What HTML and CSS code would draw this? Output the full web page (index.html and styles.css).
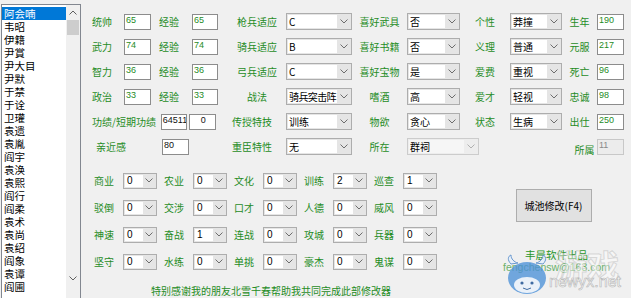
FILE: index.html
```html
<!DOCTYPE html>
<html lang="zh-CN">
<head>
    <meta charset="UTF-8">
    <title>武将修改</title>
    <link rel="stylesheet" href="styles.css">
</head>
<body>
<div class="app">
    <!-- 武将列表 -->
    <div class="listbox">
        <div class="items">
            <div class="item selected">阿会喃</div>
            <div class="item">韦昭</div>
            <div class="item">伊籍</div>
            <div class="item">尹賞</div>
            <div class="item">尹大目</div>
            <div class="item">尹默</div>
            <div class="item">于禁</div>
            <div class="item">于诠</div>
            <div class="item">卫瓘</div>
            <div class="item">袁遗</div>
            <div class="item">袁胤</div>
            <div class="item">阎宇</div>
            <div class="item">袁涣</div>
            <div class="item">袁熙</div>
            <div class="item">阎行</div>
            <div class="item">阎柔</div>
            <div class="item">袁术</div>
            <div class="item">袁尚</div>
            <div class="item">袁绍</div>
            <div class="item">阎象</div>
            <div class="item">袁谭</div>
            <div class="item">阎圃</div>
        </div>
        <div class="scrollbar">
            <svg class="sb-arrow" width="8" height="5" viewBox="0 0 8 5"><polyline points="0.5,4.5 4,1 7.5,4.5" fill="none" stroke="#606060"/></svg>
            <div class="thumb"></div>
            <div class="sb-fill"></div>
            <svg class="sb-arrow" width="8" height="5" viewBox="0 0 8 5"><polyline points="0.5,0.5 4,4 7.5,0.5" fill="none" stroke="#606060"/></svg>
        </div>
    </div>

    <div class="main">
        <!-- 基本属性 -->
        <div class="attrs">
            <div class="lbl">统帅</div><div class="field">65</div>
            <div class="lbl exp">经验</div><div class="field">65</div>
            <div class="lbl mid">枪兵适应</div><div class="combo"><span class="val">C</span><span class="arr"><svg width="8" height="5" viewBox="0 0 8 5"><polyline points="0.5,0.5 4,4 7.5,0.5" fill="none" stroke="#6d6d6d"/></svg></span></div>
            <div class="lbl mid">喜好武具</div><div class="combo"><span class="val">否</span><span class="arr"><svg width="8" height="5" viewBox="0 0 8 5"><polyline points="0.5,0.5 4,4 7.5,0.5" fill="none" stroke="#6d6d6d"/></svg></span></div>
            <div class="lbl mid">个性</div><div class="combo"><span class="val">莽撞</span><span class="arr"><svg width="8" height="5" viewBox="0 0 8 5"><polyline points="0.5,0.5 4,4 7.5,0.5" fill="none" stroke="#6d6d6d"/></svg></span></div>
            <div class="lbl mid">生年</div><div class="field">190</div>

            <div class="lbl">武力</div><div class="field">74</div>
            <div class="lbl exp">经验</div><div class="field">74</div>
            <div class="lbl mid">骑兵适应</div><div class="combo"><span class="val">B</span><span class="arr"><svg width="8" height="5" viewBox="0 0 8 5"><polyline points="0.5,0.5 4,4 7.5,0.5" fill="none" stroke="#6d6d6d"/></svg></span></div>
            <div class="lbl mid">喜好书籍</div><div class="combo"><span class="val">否</span><span class="arr"><svg width="8" height="5" viewBox="0 0 8 5"><polyline points="0.5,0.5 4,4 7.5,0.5" fill="none" stroke="#6d6d6d"/></svg></span></div>
            <div class="lbl mid">义理</div><div class="combo"><span class="val">普通</span><span class="arr"><svg width="8" height="5" viewBox="0 0 8 5"><polyline points="0.5,0.5 4,4 7.5,0.5" fill="none" stroke="#6d6d6d"/></svg></span></div>
            <div class="lbl mid">元服</div><div class="field">217</div>

            <div class="lbl">智力</div><div class="field">36</div>
            <div class="lbl exp">经验</div><div class="field">36</div>
            <div class="lbl mid">弓兵适应</div><div class="combo"><span class="val">C</span><span class="arr"><svg width="8" height="5" viewBox="0 0 8 5"><polyline points="0.5,0.5 4,4 7.5,0.5" fill="none" stroke="#6d6d6d"/></svg></span></div>
            <div class="lbl mid">喜好宝物</div><div class="combo"><span class="val">是</span><span class="arr"><svg width="8" height="5" viewBox="0 0 8 5"><polyline points="0.5,0.5 4,4 7.5,0.5" fill="none" stroke="#6d6d6d"/></svg></span></div>
            <div class="lbl mid">爱费</div><div class="combo"><span class="val">重视</span><span class="arr"><svg width="8" height="5" viewBox="0 0 8 5"><polyline points="0.5,0.5 4,4 7.5,0.5" fill="none" stroke="#6d6d6d"/></svg></span></div>
            <div class="lbl mid">死亡</div><div class="field">96</div>

            <div class="lbl">政治</div><div class="field">33</div>
            <div class="lbl exp">经验</div><div class="field">33</div>
            <div class="lbl mid">战法</div><div class="combo"><span class="val tight">骑兵突击阵</span><span class="arr"><svg width="8" height="5" viewBox="0 0 8 5"><polyline points="0.5,0.5 4,4 7.5,0.5" fill="none" stroke="#6d6d6d"/></svg></span></div>
            <div class="lbl mid">嗜酒</div><div class="combo"><span class="val">高</span><span class="arr"><svg width="8" height="5" viewBox="0 0 8 5"><polyline points="0.5,0.5 4,4 7.5,0.5" fill="none" stroke="#6d6d6d"/></svg></span></div>
            <div class="lbl mid">爱才</div><div class="combo"><span class="val">轻视</span><span class="arr"><svg width="8" height="5" viewBox="0 0 8 5"><polyline points="0.5,0.5 4,4 7.5,0.5" fill="none" stroke="#6d6d6d"/></svg></span></div>
            <div class="lbl mid">忠诚</div><div class="field">98</div>

            <div class="merit">
                <span class="lbl">功绩/短期功绩</span>
                <div class="field dark">64511</div>
                <div class="field dark center">0</div>
            </div>
            <div class="lbl mid">传授特技</div><div class="combo"><span class="val">训练</span><span class="arr"><svg width="8" height="5" viewBox="0 0 8 5"><polyline points="0.5,0.5 4,4 7.5,0.5" fill="none" stroke="#6d6d6d"/></svg></span></div>
            <div class="lbl mid">物欲</div><div class="combo"><span class="val">贪心</span><span class="arr"><svg width="8" height="5" viewBox="0 0 8 5"><polyline points="0.5,0.5 4,4 7.5,0.5" fill="none" stroke="#6d6d6d"/></svg></span></div>
            <div class="lbl mid">状态</div><div class="combo"><span class="val">生病</span><span class="arr"><svg width="8" height="5" viewBox="0 0 8 5"><polyline points="0.5,0.5 4,4 7.5,0.5" fill="none" stroke="#6d6d6d"/></svg></span></div>
            <div class="lbl mid">出仕</div><div class="field">250</div>

            <div class="merit">
                <span class="lbl close">亲近感</span>
                <div class="field dark">80</div>
            </div>
            <div class="lbl mid">重臣特性</div><div class="combo"><span class="val">无</span><span class="arr"><svg width="8" height="5" viewBox="0 0 8 5"><polyline points="0.5,0.5 4,4 7.5,0.5" fill="none" stroke="#6d6d6d"/></svg></span></div>
            <div class="lbl mid">所在</div><div class="combo off wide"><span class="val">群祠</span><span class="arr"><svg width="8" height="5" viewBox="0 0 8 5"><polyline points="0.5,0.5 4,4 7.5,0.5" fill="none" stroke="#b0b0b0"/></svg></span></div>
            <div></div><div></div>
            <div class="lbl mid low">所属</div><div class="field off">11</div>
        </div>

        <div class="lower">
            <!-- 特技 -->
            <div class="skills">
                <div class="lbl">商业</div><div class="combo sm"><span class="val">0</span><span class="arr"><svg width="8" height="5" viewBox="0 0 8 5"><polyline points="0.5,0.5 4,4 7.5,0.5" fill="none" stroke="#6d6d6d"/></svg></span></div>
                <div class="lbl">农业</div><div class="combo sm"><span class="val">0</span><span class="arr"><svg width="8" height="5" viewBox="0 0 8 5"><polyline points="0.5,0.5 4,4 7.5,0.5" fill="none" stroke="#6d6d6d"/></svg></span></div>
                <div class="lbl">文化</div><div class="combo sm"><span class="val">0</span><span class="arr"><svg width="8" height="5" viewBox="0 0 8 5"><polyline points="0.5,0.5 4,4 7.5,0.5" fill="none" stroke="#6d6d6d"/></svg></span></div>
                <div class="lbl">训练</div><div class="combo sm"><span class="val">2</span><span class="arr"><svg width="8" height="5" viewBox="0 0 8 5"><polyline points="0.5,0.5 4,4 7.5,0.5" fill="none" stroke="#6d6d6d"/></svg></span></div>
                <div class="lbl">巡查</div><div class="combo sm"><span class="val">1</span><span class="arr"><svg width="8" height="5" viewBox="0 0 8 5"><polyline points="0.5,0.5 4,4 7.5,0.5" fill="none" stroke="#6d6d6d"/></svg></span></div>

                <div class="lbl">驳倒</div><div class="combo sm"><span class="val">0</span><span class="arr"><svg width="8" height="5" viewBox="0 0 8 5"><polyline points="0.5,0.5 4,4 7.5,0.5" fill="none" stroke="#6d6d6d"/></svg></span></div>
                <div class="lbl">交涉</div><div class="combo sm"><span class="val">0</span><span class="arr"><svg width="8" height="5" viewBox="0 0 8 5"><polyline points="0.5,0.5 4,4 7.5,0.5" fill="none" stroke="#6d6d6d"/></svg></span></div>
                <div class="lbl">口才</div><div class="combo sm"><span class="val">0</span><span class="arr"><svg width="8" height="5" viewBox="0 0 8 5"><polyline points="0.5,0.5 4,4 7.5,0.5" fill="none" stroke="#6d6d6d"/></svg></span></div>
                <div class="lbl">人德</div><div class="combo sm"><span class="val">0</span><span class="arr"><svg width="8" height="5" viewBox="0 0 8 5"><polyline points="0.5,0.5 4,4 7.5,0.5" fill="none" stroke="#6d6d6d"/></svg></span></div>
                <div class="lbl">威风</div><div class="combo sm"><span class="val">0</span><span class="arr"><svg width="8" height="5" viewBox="0 0 8 5"><polyline points="0.5,0.5 4,4 7.5,0.5" fill="none" stroke="#6d6d6d"/></svg></span></div>

                <div class="lbl">神速</div><div class="combo sm"><span class="val">0</span><span class="arr"><svg width="8" height="5" viewBox="0 0 8 5"><polyline points="0.5,0.5 4,4 7.5,0.5" fill="none" stroke="#6d6d6d"/></svg></span></div>
                <div class="lbl">奋战</div><div class="combo sm"><span class="val">1</span><span class="arr"><svg width="8" height="5" viewBox="0 0 8 5"><polyline points="0.5,0.5 4,4 7.5,0.5" fill="none" stroke="#6d6d6d"/></svg></span></div>
                <div class="lbl">连战</div><div class="combo sm"><span class="val">0</span><span class="arr"><svg width="8" height="5" viewBox="0 0 8 5"><polyline points="0.5,0.5 4,4 7.5,0.5" fill="none" stroke="#6d6d6d"/></svg></span></div>
                <div class="lbl">攻城</div><div class="combo sm"><span class="val">0</span><span class="arr"><svg width="8" height="5" viewBox="0 0 8 5"><polyline points="0.5,0.5 4,4 7.5,0.5" fill="none" stroke="#6d6d6d"/></svg></span></div>
                <div class="lbl">兵器</div><div class="combo sm"><span class="val">0</span><span class="arr"><svg width="8" height="5" viewBox="0 0 8 5"><polyline points="0.5,0.5 4,4 7.5,0.5" fill="none" stroke="#6d6d6d"/></svg></span></div>

                <div class="lbl">坚守</div><div class="combo sm"><span class="val">0</span><span class="arr"><svg width="8" height="5" viewBox="0 0 8 5"><polyline points="0.5,0.5 4,4 7.5,0.5" fill="none" stroke="#6d6d6d"/></svg></span></div>
                <div class="lbl">水练</div><div class="combo sm"><span class="val">0</span><span class="arr"><svg width="8" height="5" viewBox="0 0 8 5"><polyline points="0.5,0.5 4,4 7.5,0.5" fill="none" stroke="#6d6d6d"/></svg></span></div>
                <div class="lbl">单挑</div><div class="combo sm"><span class="val">0</span><span class="arr"><svg width="8" height="5" viewBox="0 0 8 5"><polyline points="0.5,0.5 4,4 7.5,0.5" fill="none" stroke="#6d6d6d"/></svg></span></div>
                <div class="lbl">豪杰</div><div class="combo sm"><span class="val">0</span><span class="arr"><svg width="8" height="5" viewBox="0 0 8 5"><polyline points="0.5,0.5 4,4 7.5,0.5" fill="none" stroke="#6d6d6d"/></svg></span></div>
                <div class="lbl">鬼谋</div><div class="combo sm"><span class="val">0</span><span class="arr"><svg width="8" height="5" viewBox="0 0 8 5"><polyline points="0.5,0.5 4,4 7.5,0.5" fill="none" stroke="#6d6d6d"/></svg></span></div>
            </div>

            <div class="side">
                <button class="city-btn">城池修改(F4)</button>
                <div class="credit">丰晨软件出品</div>
                <div class="credit mail">fengchensw@163.com</div>
            </div>
        </div>

        <div class="thanks">特别感谢我的朋友北雪千春帮助我共同完成此部修改器</div>
    </div>
</div>

<!-- 水印 -->
<div class="watermark">
    <svg class="cow" width="44" height="42" viewBox="0 0 44 42">
        <path d="M6 10 C2 6 3 2 6 1 C6 5 9 8 13 9 Z" fill="#e8f0fa" stroke="#5a8fcc" stroke-width="1"/>
        <path d="M38 10 C42 6 41 2 38 1 C38 5 35 8 31 9 Z" fill="#e8f0fa" stroke="#5a8fcc" stroke-width="1"/>
        <ellipse cx="22" cy="24" rx="19" ry="16" fill="#4a8fd8" opacity="0.85"/>
        <ellipse cx="22" cy="31" rx="13" ry="8" fill="#eaf2fb"/>
        <circle cx="17" cy="29" r="1.6" fill="#2c5d9a"/>
        <circle cx="27" cy="29" r="1.6" fill="#2c5d9a"/>
        <path d="M18 34 Q22 37 26 34" fill="none" stroke="#2c5d9a" stroke-width="1"/>
    </svg>
    <div class="wm-text">
        <div class="wm-big">游戏</div>
        <div class="wm-site">newyx.net</div>
    </div>
</div>
</body>
</html>
```

FILE: styles.css
```css
body {
    margin: 0;
    width: 631px;
    height: 298px;
    overflow: hidden;
    position: relative;
    background-color: #f0f0f0;
    font-family: 'Noto Sans CJK SC', sans-serif;
    font-size: 10px;
    color: #000;
}

.app {
    display: flex;
    align-items: flex-start;
}

/* 列表 */
.listbox {
    display: flex;
    margin: 4px 0 0 1px;
    width: 78px;
    height: 300px;
    border: 1px solid #828790;
    background-color: #fff;
}

.items {
    flex: 1;
    padding-top: 2px;
}

.item {
    height: 13px;
    line-height: 13px;
    padding-left: 2px;
    font-size: 10.5px;
    white-space: nowrap;
}

.item.selected {
    background-color: #0078d7;
    color: #fff;
}

.scrollbar {
    width: 14px;
    display: flex;
    flex-direction: column;
    align-items: center;
    background-color: #f0f0f0;
}

.sb-arrow {
    margin: 5px 0;
}

.thumb {
    width: 12px;
    height: 15px;
    background-color: #cdcdcd;
}

.sb-fill {
    flex: 1;
    max-height: 236px;
}

/* 右侧主体 */
.main {
    flex: 1;
    padding-top: 9px;
}

.attrs {
    display: grid;
    grid-template-columns: 35px 27px 41px 26px 68px 66px 55px 53px 50px 52px 35px 27px;
    grid-auto-rows: 25px;
    align-items: center;
    margin-left: 8px;
}

.lbl {
    color: #1f8c1f;
    white-space: nowrap;
    padding-left: 3px;
}

.lbl.exp {
    padding-left: 8px;
}

.lbl.mid {
    padding-left: 0;
    text-align: center;
}

.attrs > .lbl.mid:nth-child(12n+5) {
    padding-left: 10px;
}

.lbl.low {
    padding-top: 5px;
}

.field {
    height: 14px;
    border: 1px solid #8c8c8c;
    background-color: #fff;
    color: #1f8c1f;
    font-family: 'Liberation Sans', sans-serif;
    font-size: 9px;
    line-height: 11px;
    padding-left: 1px;
    overflow: hidden;
    white-space: nowrap;
}

.field.dark {
    color: #111;
}

.field.center {
    text-align: center;
}

.field.off {
    background-color: #ececec;
    border-color: #c8c8c8;
    color: #8a8a8a;
}

.merit {
    grid-column: span 4;
    display: flex;
    align-items: center;
}

.merit .lbl {
    width: 70px;
}

.merit .lbl.close {
    padding-left: 7px;
    width: 66px;
}

.merit .field {
    width: 24px;
    margin-right: 2px;
}

/* 下拉框 */
.combo {
    display: flex;
    height: 13px;
    padding: 1px;
    border: 1px solid #adadad;
    background-color: #e5e5e5;
}

.combo .val {
    flex: 1;
    background-color: #fff;
    line-height: 13px;
    padding-left: 1px;
    white-space: nowrap;
    overflow: hidden;
}

.combo .val.tight {
    letter-spacing: -0.6px;
}

.combo .arr {
    width: 13px;
    display: flex;
    align-items: center;
    justify-content: center;
}

.combo.off {
    background-color: #ededed;
    border-color: #cccccc;
}

.combo.off .val {
    background-color: #f6f6f6;
}

.combo.wide {
    width: 68px;
}

.combo.sm {
    width: 30px;
    height: 12px;
}

.combo.sm .arr {
    width: 12px;
}

.combo.sm .val {
    line-height: 12px;
    padding-left: 2px;
    font-family: 'Liberation Sans', sans-serif;
}

.lower {
    display: flex;
    margin-top: 8px;
}

.skills {
    display: grid;
    grid-template-columns: repeat(5, 29px 41px);
    grid-auto-rows: 27px;
    align-items: center;
    margin-left: 13px;
}

.skills .lbl {
    padding-left: 0;
}

.side {
    width: 135px;
    margin-left: 42px;
    display: flex;
    flex-direction: column;
    align-items: center;
}

.city-btn {
    margin-top: 22px;
    width: 76px;
    height: 33px;
    background-color: #e1e1e1;
    border: 1px solid #adadad;
    font-family: 'Noto Sans CJK SC', sans-serif;
    font-size: 10px;
    color: #000;
    padding: 0;
}

.credit {
    margin-top: 26px;
    padding-left: 6px;
    color: #2a962a;
    line-height: 13px;
    font-size: 10.5px;
}

.credit.mail {
    margin-top: 0;
    color: #6bb06b;
    font-family: 'Liberation Sans', sans-serif;
}

.thanks {
    margin: 9px 0 0 70px;
    color: #1f8c1f;
    line-height: 13px;
    white-space: nowrap;
}

/* 水印 */
.watermark {
    position: absolute;
    left: 505px;
    top: 248px;
    display: flex;
    align-items: flex-end;
    pointer-events: none;
}

.cow {
    opacity: 0.9;
}

.wm-text {
    display: flex;
    flex-direction: column;
    align-items: flex-end;
}

.wm-big {
    font-size: 32px;
    line-height: 32px;
    font-weight: bold;
    color: rgba(255, 255, 255, 0.45);
    -webkit-text-stroke: 1px rgba(170, 170, 170, 0.4);
    margin-right: 2px;
    margin-bottom: -6px;
}

.wm-site {
    font-family: 'Liberation Sans', sans-serif;
    font-size: 16px;
    line-height: 16px;
    color: rgba(255, 255, 255, 0.85);
    -webkit-text-stroke: 0.6px rgba(150, 150, 150, 0.7);
    margin-bottom: 6px;
}
```
